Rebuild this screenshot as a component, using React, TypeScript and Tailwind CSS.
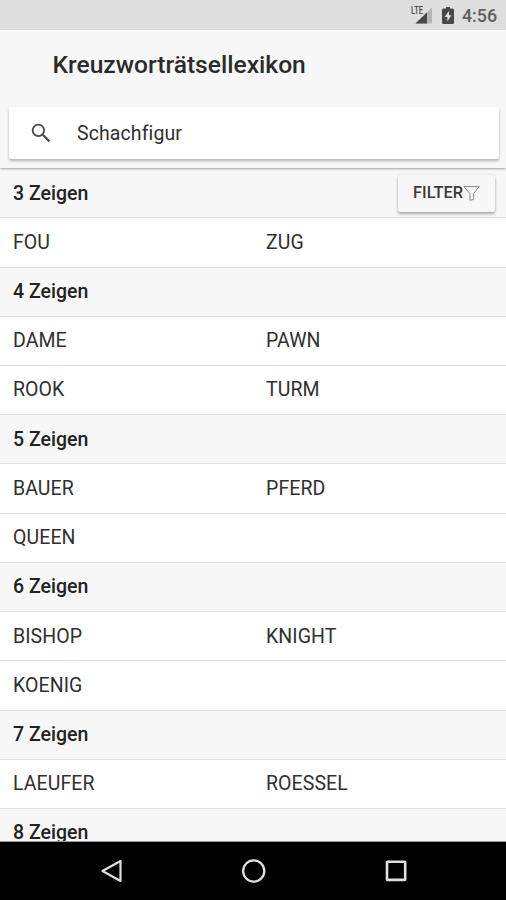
import { Fragment } from "react";

const groups = [
  { length: 3, rows: [["FOU", "ZUG"]] },
  { length: 4, rows: [["DAME", "PAWN"], ["ROOK", "TURM"]] },
  { length: 5, rows: [["BAUER", "PFERD"], ["QUEEN"]] },
  { length: 6, rows: [["BISHOP", "KNIGHT"], ["KOENIG"]] },
  { length: 7, rows: [["LAEUFER", "ROESSEL"]] },
  { length: 8, rows: [] },
];

function StatusBar() {
  return (
    <div className="flex h-[30px] shrink-0 items-center justify-end bg-[#dedede] pr-[9px] text-[#484848]">
      <div className="relative mr-[10px] h-5 w-[22px]">
        <svg className="h-5 w-[22px]" viewBox="0 0 22 20">
          <path d="M22.5 2V18.5H5.5Z" fill="#b5b5b5" />
          <path d="M17 7.3V18.5H5.5Z" fill="#484848" />
        </svg>
        <span className="absolute top-px left-[1.5px] origin-left scale-x-[0.72] text-[10.5px] leading-[10px] font-medium text-[#505050]">
          LTE
        </span>
      </div>
      <svg className="mr-[8px] h-[17px] w-3" viewBox="0 0 12 17">
        <path
          fillRule="evenodd"
          d="M4 0H8V1.5H10.5Q12 1.5 12 3V15.5Q12 17 10.5 17H1.5Q0 17 0 15.5V3Q0 1.5 1.5 1.5H4ZM7 4L2.6 10H5.3V14.4L9.5 8.3H7Z"
          fill="#484848"
        />
      </svg>
      <span className="pt-px text-[17.8px] leading-[29px] font-medium text-[#606060]">4:56</span>
    </div>
  );
}

function Header() {
  return (
    <header className="relative z-10 flex h-[138px] shrink-0 flex-col bg-[#f7f7f7] shadow-[0_1px_2px_rgba(0,0,0,0.35)]">
      <h1 className="h-[77px] pl-[52.5px] text-[24.6px] leading-[69px] font-medium text-[#2b2b2b]">
        Kreuzworträtsellexikon
      </h1>
      <div className="mr-[7px] ml-[9px] flex h-[52px] items-center rounded-[2px] bg-white shadow-[0_2px_3px_rgba(0,0,0,0.27)]">
        <svg className="ml-[22px] size-5" viewBox="0 0 20 20" fill="none" stroke="#4a4a4a">
          <circle cx="7.4" cy="7.4" r="5.7" strokeWidth="1.8" />
          <path d="M11.8 11.8L18.4 18.4" strokeWidth="2.2" />
        </svg>
        <span className="ml-[26px] pt-px text-[19.5px] tracking-[0.1px] text-[#303030]">Schachfigur</span>
      </div>
    </header>
  );
}

function FilterButton() {
  return (
    <button className="flex h-[37px] w-[97px] items-center rounded-[2px] bg-[#f7f7f7] pl-[15px] text-[16.4px] font-medium text-[#3a3a3a] shadow-[0_2px_3px_rgba(0,0,0,0.3),0_0_2px_rgba(0,0,0,0.12)]">
      FILTER
      <svg className="h-[15px] w-[17px]" viewBox="0 0 17 15" fill="none" stroke="#8c8c8c">
        <path d="M.8 .6H16.2L10.4 7.8V13.5L7 14.3V7.8Z" strokeWidth="1" />
      </svg>
    </button>
  );
}

function NavBar() {
  return (
    <nav className="relative z-10 flex h-[58px] shrink-0 items-center justify-between bg-black pr-[98px] pl-[100px]">
      <svg className="size-6" viewBox="0 0 24 24" fill="none" stroke="#e0e0e0" strokeWidth="2.2">
        <path d="M20.5 2V22L2.5 12Z" strokeLinejoin="round" />
      </svg>
      <svg className="size-6" viewBox="0 0 24 24" fill="none" stroke="#e0e0e0" strokeWidth="2.3">
        <circle cx="11.7" cy="12" r="10.6" />
      </svg>
      <svg className="size-6" viewBox="0 0 24 24" fill="none" stroke="#e0e0e0" strokeWidth="2.6">
        <rect x="3" y="2.7" width="18.2" height="18.2" rx=".5" />
      </svg>
    </nav>
  );
}

export default function App() {
  return (
    <div className="flex h-[900px] w-[506px] flex-col overflow-hidden bg-white font-['Roboto',sans-serif]">
      <StatusBar />
      <Header />
      <main className="min-h-0 flex-1 overflow-hidden border-b border-[#999] bg-[#f7f7f7] pt-[1.1px]">
        {groups.map((group, i) => (
          <Fragment key={group.length}>
            <div className="flex h-[49.23px] items-center justify-between border-b border-[#dedede] bg-[#f7f7f7] pr-[11px] pl-[13px]">
              <h2 className="text-[19.5px] font-medium text-[#222]">{group.length} Zeigen</h2>
              {i === 0 && <FilterButton />}
            </div>
            {group.rows.map((row) => (
              <div
                key={row[0]}
                className="grid h-[49.23px] grid-cols-2 items-center border-b border-[#dedede] bg-white text-[19.5px] tracking-[0.08px] text-[#303030]"
              >
                {row.map((word) => (
                  <span key={word} className="pl-[13px]">
                    {word}
                  </span>
                ))}
              </div>
            ))}
          </Fragment>
        ))}
      </main>
      <NavBar />
    </div>
  );
}
